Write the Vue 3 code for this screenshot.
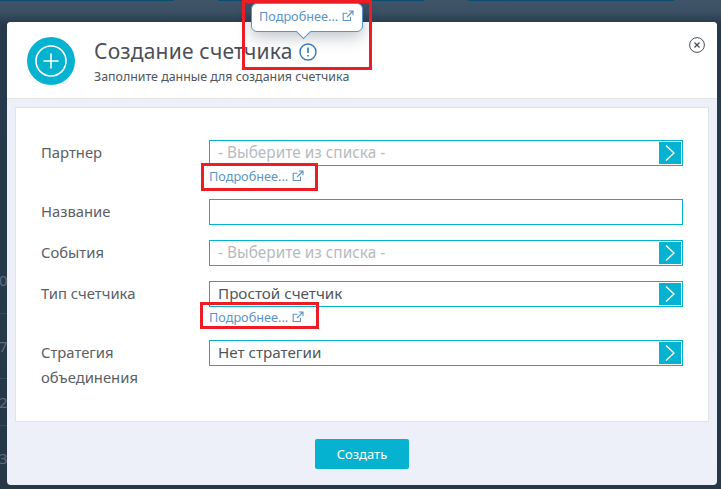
<script setup>
const rows = [
  { label: 'Партнер', value: '- Выберите из списка -', placeholder: true, select: true, link: true },
  { label: 'Название', value: '', select: false },
  { label: 'События', value: '- Выберите из списка -', placeholder: true, select: true },
  { label: 'Тип счетчика', value: 'Простой счетчик', select: true, link: true },
  { label: 'Стратегия объединения', value: 'Нет стратегии', select: true },
]
const edgeDigits = [
  { text: '0', top: 271 },
  { text: '7', top: 337 },
  { text: '2', top: 393 },
  { text: '3', top: 449 },
]
const edgeLines = [313, 378, 425]
</script>

<template>
  <div class="page">
    <div class="topline one"></div>
    <div class="topline two"></div>
    <div class="topline three"></div>
    <span v-for="d in edgeDigits" :key="d.text" class="edge-digit" :style="{ top: d.top + 'px' }">{{ d.text }}</span>
    <span v-for="y in edgeLines" :key="y" class="edge-line" :style="{ top: y + 'px' }"></span>

    <div class="modal">
      <header class="head">
        <div class="badge">
          <svg width="32" height="32" viewBox="0 0 32 32" fill="none" stroke="#fff">
            <circle cx="16" cy="16" r="15" stroke-width="1.6" />
            <path d="M16 8.5v15M8.5 16h15" stroke-width="1.6" />
          </svg>
        </div>
        <div class="titles">
          <h1 class="title">
            Создание счетчика
            <svg class="info" width="18" height="18" viewBox="0 0 18 18" fill="none" stroke="#3a7ebf">
              <circle cx="9" cy="9" r="8" stroke-width="1.5" />
              <path d="M9 4.5v5.5M9 12v1.6" stroke-width="1.7" />
            </svg>
          </h1>
          <p class="sub">Заполните данные для создания счетчика</p>
        </div>
        <svg class="close" width="16" height="16" viewBox="0 0 16 16" fill="none" stroke="#4a5058">
          <circle cx="8" cy="8" r="7.4" />
          <path d="M5.5 5.5l5 5M10.5 5.5l-5 5" stroke-width="1.3" />
        </svg>
      </header>

      <div class="body">
        <form class="card" @submit.prevent>
          <div v-for="row in rows" :key="row.label" class="row">
            <div class="label">{{ row.label }}</div>
            <div class="control">
              <div class="field">
                <span class="value" :class="{ placeholder: row.placeholder }">{{ row.value }}</span>
                <span v-if="row.select" class="arrow">
                  <svg width="10" height="16" viewBox="0 0 10 16" fill="none" stroke="#fff" stroke-width="1.4">
                    <path d="M1 0.5l8 7.5-8 7.5" />
                  </svg>
                </span>
              </div>
              <a v-if="row.link" class="more">
                Подробнее...
                <svg width="12" height="12" viewBox="0 0 12 12" fill="none" stroke="#5b93c9" stroke-width="1.1">
                  <path d="M8.5 6.8v3.7H1.2V3.2h4.2M6.8 1h4.2v4.2M11 1L5 7" />
                </svg>
              </a>
            </div>
          </div>
        </form>
        <div class="actions">
          <button class="submit" type="button">Создать</button>
        </div>
      </div>
    </div>

    <div class="tip">
      <a class="more tip-link">
        Подробнее...
        <svg width="12" height="12" viewBox="0 0 12 12" fill="none" stroke="#5b93c9" stroke-width="1.1">
          <path d="M8.5 6.8v3.7H1.2V3.2h4.2M6.8 1h4.2v4.2M11 1L5 7" />
        </svg>
      </a>
      <span class="tip-arrow"></span>
    </div>

    <div class="mark mark-top"></div>
    <div class="mark mark-one"></div>
    <div class="mark mark-two"></div>
  </div>
</template>

<style>
html, body { margin: 0; background: #27394a; }
</style>

<style scoped>
.page {
  position: relative;
  box-sizing: border-box;
  width: 721px;
  height: 489px;
  padding: 22px 4px 4px 7px;
  overflow: hidden;
  background: linear-gradient(180deg, #3f5468 0, #3b5063 12px, #263a4b 24px, #263847 100%);
  font-family: "Noto Sans", "Open Sans", sans-serif;
  color: #50565c;
}
.topline { position: absolute; top: 0; height: 1px; background: #0a4f6e; }
.one { left: 0; width: 174px; }
.two { left: 218px; width: 206px; }
.three { left: 468px; width: 206px; }
.edge-digit { position: absolute; left: -1px; font-size: 15px; line-height: 18px; color: #5d6d7b; }
.edge-line { position: absolute; left: 0; width: 7px; height: 1px; background: #38495a; }
.modal {
  display: flex;
  flex-direction: column;
  height: 463px;
  border-radius: 4px;
  overflow: hidden;
  background: #edf0f8;
}
.head {
  display: flex;
  align-items: flex-start;
  box-sizing: border-box;
  height: 77px;
  padding: 15px 12px 0 20px;
  background: #fff;
  border-bottom: 1px solid #e2e4e8;
}
.badge {
  display: flex;
  align-items: center;
  justify-content: center;
  flex: none;
  width: 48px;
  height: 48px;
  border-radius: 50%;
  background: #05b3d1;
}
.titles { flex: 1; margin-left: 19px; }
.title {
  display: flex;
  align-items: center;
  gap: 6px;
  margin: 0;
  font-size: 21px;
  font-weight: 400;
  line-height: 28px;
  letter-spacing: 0.2px;
  color: #4a5056;
}
.info { position: relative; top: 1px; }
.sub { margin: 4px 0 0; font-size: 12.4px; line-height: 16px; color: #50565c; }
.close { flex: none; }
.body { display: flex; flex-direction: column; flex: 1; padding: 8px 8px 0; }
.card {
  box-sizing: border-box;
  height: 315px;
  padding: 32px 25px 0 25px;
  background: #fff;
  border: 1px solid #e2e4e8;
}
.row { display: flex; margin-bottom: 15px; }
.label {
  flex: none;
  box-sizing: border-box;
  width: 168px;
  padding-right: 50px;
  font-size: 14.8px;
  line-height: 25px;
  color: #5a6066;
}
.control { flex: 1; }
.field {
  display: flex;
  align-items: center;
  justify-content: space-between;
  box-sizing: border-box;
  height: 26px;
  padding: 1px 1px 1px 8px;
  border: 1px solid #05b3d1;
}
.value { margin-top: -2px; font-size: 15.2px; line-height: 22px; color: #50565c; }
.value.placeholder { margin-top: 0; font-size: 15.4px; color: #b6bbc0; }
.arrow {
  display: flex;
  align-items: center;
  justify-content: center;
  width: 22px;
  height: 22px;
  background: #05b3d1;
}
.more {
  display: flex;
  align-items: center;
  gap: 4px;
  margin-top: 1px;
  margin-bottom: -1px;
  font-size: 12.7px;
  line-height: 18px;
  color: #5b93c9;
}
.tip {
  position: absolute;
  left: 251px;
  top: 3px;
  box-sizing: border-box;
  width: 112px;
  height: 29px;
  padding: 3px 0 0 7px;
  background: #fff;
  border: 1px solid #5b93c9;
  border-radius: 6px;
  box-shadow: 0 5px 16px rgba(40, 60, 80, 0.3);
}
.tip-link { margin: 0; }
.tip-arrow {
  position: absolute;
  left: 46px;
  bottom: -6px;
  width: 10px;
  height: 10px;
  background: #fff;
  border-right: 1px solid #5b93c9;
  border-bottom: 1px solid #5b93c9;
  transform: rotate(45deg);
}
.actions { display: flex; justify-content: center; padding-top: 17px; }
.submit {
  width: 94px;
  height: 30px;
  padding: 0;
  border: 0;
  border-radius: 2px;
  background: #05b3d1;
  color: #fff;
  font-family: inherit;
  font-size: 13px;
}
.mark { position: absolute; box-sizing: border-box; border: 3px solid #ee1c25; }
.mark-top { left: 242px; top: 0; width: 130px; height: 70px; }
.mark-one { left: 201px; top: 163px; width: 117px; height: 28px; }
.mark-two { left: 200px; top: 302px; width: 119px; height: 27px; }
</style>
